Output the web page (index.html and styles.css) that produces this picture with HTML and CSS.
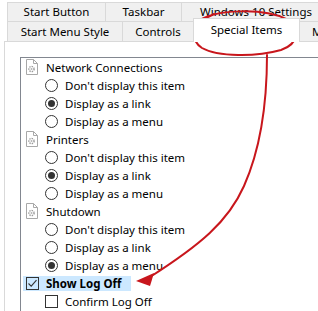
FILE: index.html
```html
<!DOCTYPE html>
<html lang="en">
<head>
  <meta charset="UTF-8">
  <title>Special Items</title>
  <link rel="stylesheet" href="styles.css">
</head>
<body>

<div class="window">
  <div class="tabs">
    <div class="tab-row">
      <div class="tab tab-start">Start Button</div>
      <div class="tab tab-taskbar">Taskbar</div>
      <div class="tab tab-win10">Windows 10 Settings</div>
    </div>
    <div class="tab-row">
      <div class="tab tab-style">Start Menu Style</div>
      <div class="tab tab-controls">Controls</div>
      <div class="tab tab-special active">Special Items</div>
      <div class="tab tab-menu">M</div>
    </div>
  </div>

  <div class="page">
    <div class="list">
      <div class="row head">
        <svg class="item-icon" width="14" height="16" viewBox="0 0 14 16">
          <path d="M1.5 0.5 H8.5 L12.5 4.5 V15.5 H1.5 Z" fill="#fff" stroke="#a8a8a8"/>
          <path d="M8.5 0.5 V4.5 H12.5" fill="none" stroke="#a8a8a8"/>
          <circle cx="6.5" cy="10" r="2.6" fill="none" stroke="#9a9a9a" stroke-width="1.4" stroke-dasharray="1.4 1"/>
          <circle cx="6.5" cy="10" r="1" fill="#b5b5b5"/>
        </svg>
        <span>Network Connections</span>
      </div>
      <div class="row option"><span class="radio"></span>Don't display this item</div>
      <div class="row option"><span class="radio on"></span>Display as a link</div>
      <div class="row option"><span class="radio"></span>Display as a menu</div>

      <div class="row head">
        <svg class="item-icon" width="14" height="16" viewBox="0 0 14 16">
          <path d="M1.5 0.5 H8.5 L12.5 4.5 V15.5 H1.5 Z" fill="#fff" stroke="#a8a8a8"/>
          <path d="M8.5 0.5 V4.5 H12.5" fill="none" stroke="#a8a8a8"/>
          <circle cx="6.5" cy="10" r="2.6" fill="none" stroke="#9a9a9a" stroke-width="1.4" stroke-dasharray="1.4 1"/>
          <circle cx="6.5" cy="10" r="1" fill="#b5b5b5"/>
        </svg>
        <span>Printers</span>
      </div>
      <div class="row option"><span class="radio"></span>Don't display this item</div>
      <div class="row option"><span class="radio on"></span>Display as a link</div>
      <div class="row option"><span class="radio"></span>Display as a menu</div>

      <div class="row head">
        <svg class="item-icon" width="14" height="16" viewBox="0 0 14 16">
          <path d="M1.5 0.5 H8.5 L12.5 4.5 V15.5 H1.5 Z" fill="#fff" stroke="#a8a8a8"/>
          <path d="M8.5 0.5 V4.5 H12.5" fill="none" stroke="#a8a8a8"/>
          <circle cx="6.5" cy="10" r="2.6" fill="none" stroke="#9a9a9a" stroke-width="1.4" stroke-dasharray="1.4 1"/>
          <circle cx="6.5" cy="10" r="1" fill="#b5b5b5"/>
        </svg>
        <span>Shutdown</span>
      </div>
      <div class="row option"><span class="radio"></span>Don't display this item</div>
      <div class="row option"><span class="radio"></span>Display as a link</div>
      <div class="row option"><span class="radio on"></span>Display as a menu</div>

      <div class="row head check-row">
        <span class="selected">
          <span class="check on">
            <svg width="11" height="11" viewBox="0 0 11 11"><path d="M1.5 5.5 L4.2 8.2 L9.5 2.2" fill="none" stroke="#333" stroke-width="1.1"/></svg>
          </span>
          <b>Show Log Off</b>
        </span>
      </div>
      <div class="row option"><span class="check"></span>Confirm Log Off</div>
    </div>
  </div>

  <!-- hand-drawn annotation on top of the screenshot -->
  <svg class="marks" width="318" height="311" viewBox="0 0 318 311">
    <path d="M198 21 C214 10 262 7 286 19 C301 27 299 44 281 50 C256 57 218 57 202 48 C191 41 192 28 204 19 L214 14"
          fill="none" stroke="#c8161c" stroke-width="2" stroke-linecap="round"/>
    <path d="M267 55 C267 105 260 150 244 186 C228 222 200 245 150 277"
          fill="none" stroke="#c8161c" stroke-width="2" stroke-linecap="round"/>
    <polygon points="136,281 154,273 150,286" fill="#c8161c"/>
  </svg>
</div>

</body>
</html>
```

FILE: styles.css
```css
body {
  margin: 0;
  padding: 0;
  background-color: #fff;
  font-family: "Noto Sans", "Open Sans", sans-serif;
  font-size: 11.5px;
  color: #000;
  overflow: hidden;
}

.window {
  position: relative;
  width: 318px;
  height: 311px;
  overflow: hidden;
}

.tabs {
  padding-top: 2px;
}

.tab-row {
  display: flex;
  padding-left: 7px;
  white-space: nowrap;
}

.tab {
  flex: none;
  box-sizing: border-box;
  background-color: #f0f0f0;
  border: 1px solid #d9d9d9;
  border-bottom: none;
  margin-left: -1px;
  text-align: center;
  height: 19px;
  line-height: 18px;
}

.tab-row + .tab-row .tab {
  height: 20px;
  line-height: 20px;
}

.tab-start { width: 99px; margin-left: 0; }
.tab-taskbar { width: 77px; }
.tab-win10 { width: 150px; }
.tab-style { width: 116px; margin-left: 0; }
.tab-controls { width: 72px; }
.tab-special { width: 107px; }
.tab-menu { width: 60px; text-align: left; padding-left: 12px; }

.tab-row + .tab-row .tab.active {
  position: relative;
  z-index: 2;
  background-color: #fff;
  height: 24px;
  line-height: 22px;
  margin-top: -3px;
  margin-bottom: -1px;
}

.page {
  background-color: #fff;
  border-top: 1px solid #d9d9d9;
  border-left: 1px solid #d9d9d9;
  margin-left: 4px;
  padding: 15px 0 0 15px;
  height: 300px;
}

.list {
  border: 1px solid #828790;
  width: 400px;
  height: 300px;
  padding-top: 0;
}

.row {
  display: flex;
  align-items: center;
  height: 18px;
  white-space: nowrap;
}

.head {
  padding-left: 4px;
}

.item-icon {
  flex: none;
  margin-right: 7px;
}

.option {
  padding-left: 24px;
}

.radio {
  flex: none;
  box-sizing: border-box;
  width: 13px;
  height: 13px;
  border: 1px solid #333;
  border-radius: 50%;
  margin-right: 7px;
  display: flex;
  align-items: center;
  justify-content: center;
}

.radio.on::after {
  content: "";
  width: 7px;
  height: 7px;
  border-radius: 50%;
  background-color: #333;
}

.check {
  flex: none;
  box-sizing: border-box;
  width: 13px;
  height: 13px;
  border: 1px solid #333;
  margin-right: 7px;
  display: flex;
  align-items: center;
  justify-content: center;
}

.check svg {
  display: block;
}

.check-row {
  padding-left: 2px;
}

.selected {
  display: flex;
  align-items: center;
  background-color: #cce8ff;
  height: 15px;
  padding: 0 10px 0 3px;
}

.selected b {
  font-weight: bold;
}

.marks {
  position: absolute;
  left: 0;
  top: 0;
  pointer-events: none;
}
```
